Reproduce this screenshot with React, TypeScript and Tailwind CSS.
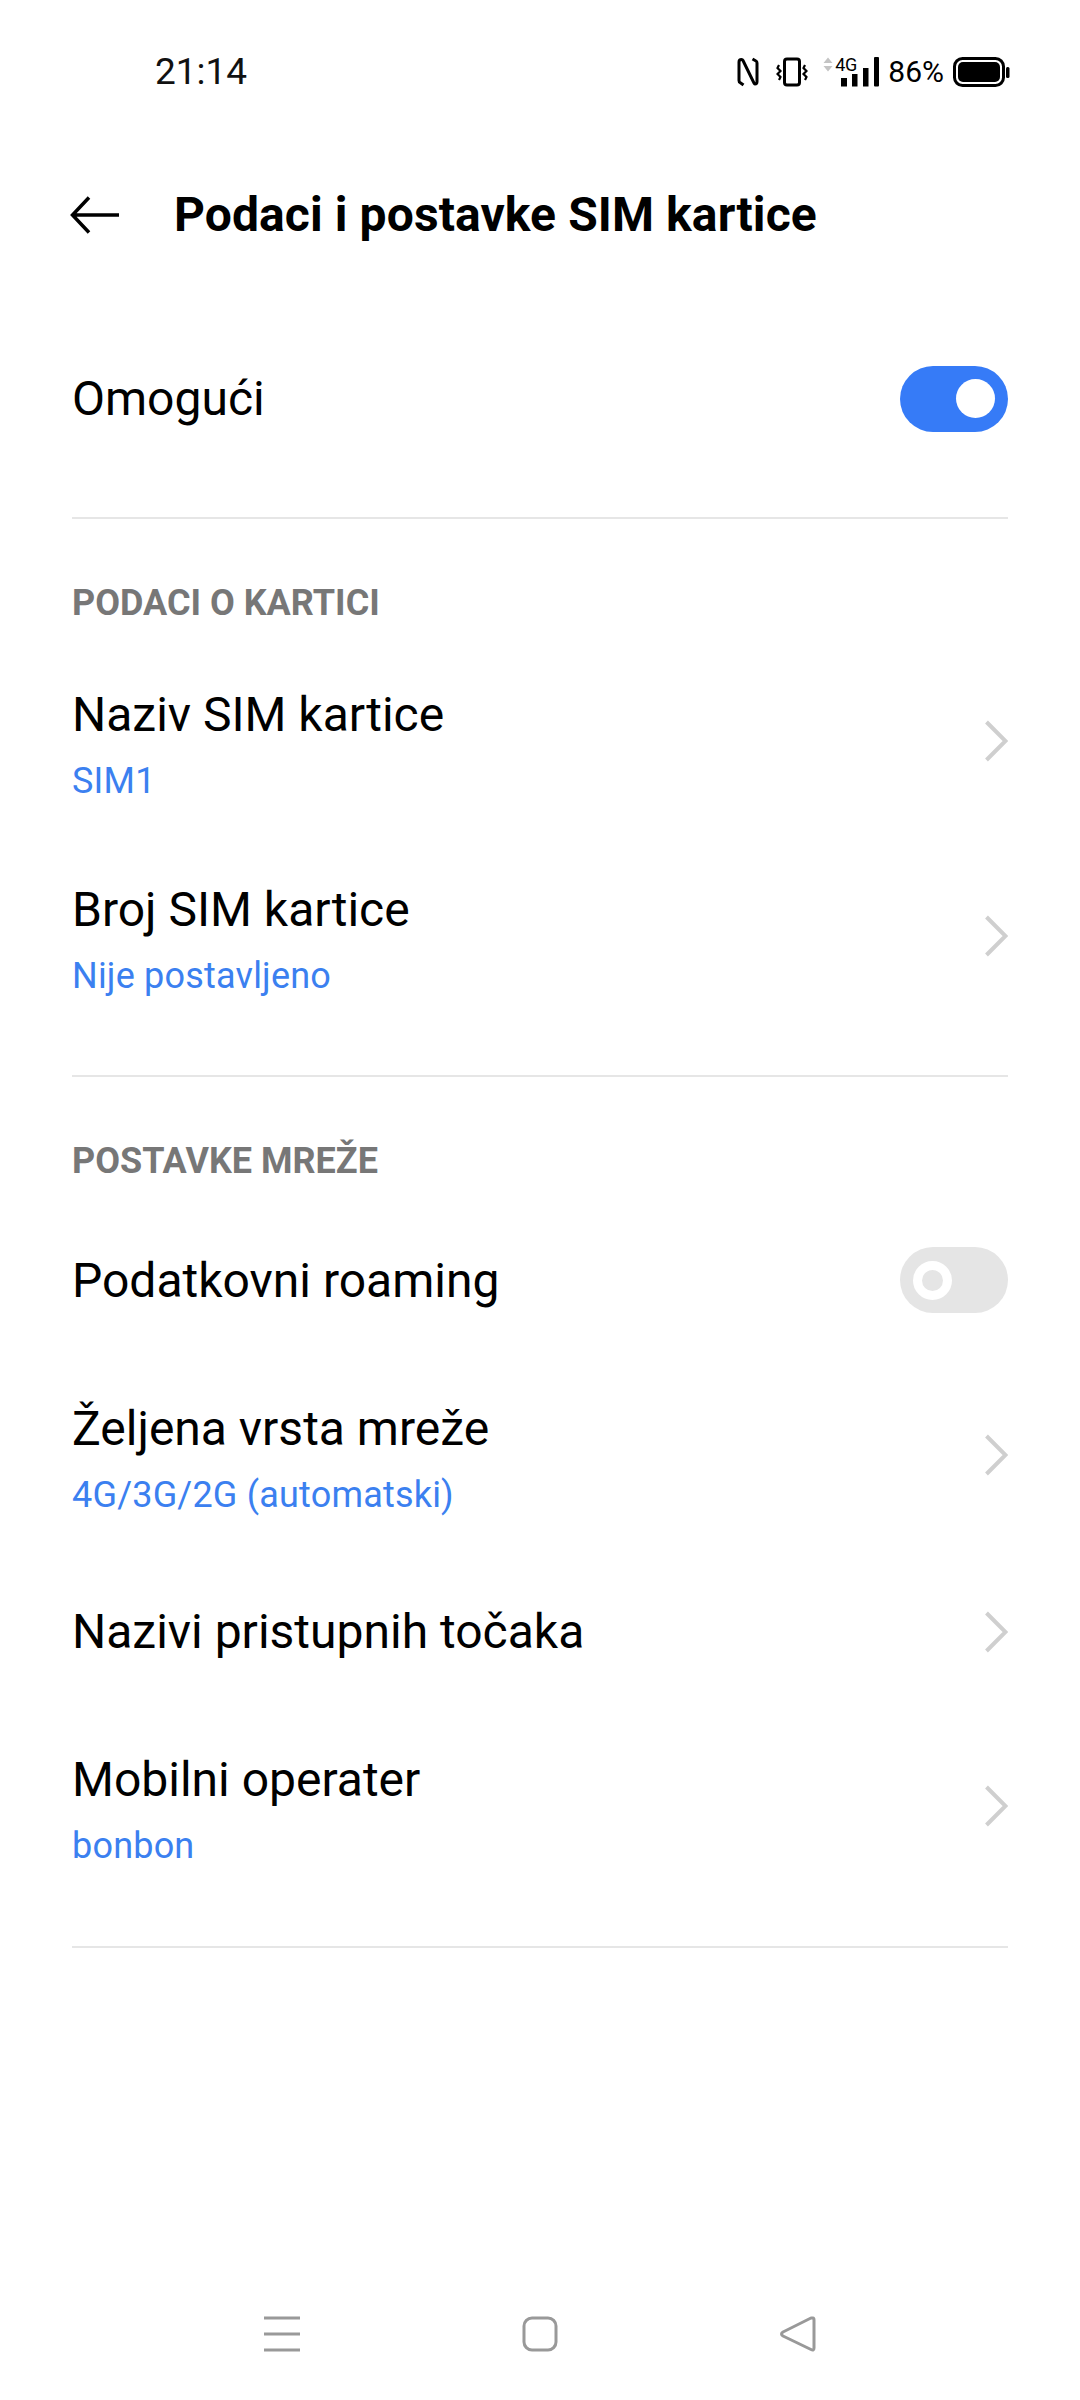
import React from 'react';

const Chevron = ({ lift }: { lift?: boolean }) => (
  <svg width="26" height="44" viewBox="0 0 26 44" fill="none" className={lift ? 'shrink-0 mb-[4px]' : 'shrink-0'}>
    <path d="M4.5 3 L23.5 22 L4.5 41" stroke="#cfcfcf" strokeWidth="4" strokeLinejoin="miter" />
  </svg>
);

const Toggle = ({ on }: { on: boolean }) =>
  on ? (
    <div className="w-[108px] h-[66px] rounded-full bg-[#367bf7] flex items-center justify-end pr-[13px]">
      <div className="w-[39px] h-[39px] rounded-full bg-white" />
    </div>
  ) : (
    <div className="w-[108px] h-[66px] mb-[2px] rounded-full bg-[#e5e5e5] flex items-center pl-[13px]">
      <div className="w-[39px] h-[39px] rounded-full border-[9px] border-white bg-[#e5e5e5]" />
    </div>
  );

const Row = ({ title, sub }: { title: string; sub: string }) => (
  <div className="flex items-center justify-between h-[195px]">
    <div className="flex flex-col pt-[4px]">
      <div className="text-[48px] leading-[56px] text-black">{title}</div>
      <div className="text-[36px] leading-[42px] mt-[17px] tracking-[0.2px] text-[#3b80f0]">{sub}</div>
    </div>
    <Chevron lift />
  </div>
);

const SectionLabel = ({ children }: { children: React.ReactNode }) => (
  <div className="pt-[63px] pb-[21px] text-[36px] leading-[42px] font-bold text-[#777777]">{children}</div>
);

const Divider = () => <div className="h-[2px] bg-[#e6e6e6]" />;

const StatusIcons = () => (
  <div className="flex items-center">
    {/* nfc */}
    <svg width="22" height="30" viewBox="0 0 22 30" fill="none" stroke="#000" strokeWidth="3">
      <path d="M6.5 28 L3 25.5 Q2 25 2 23.5 V5 Q2 2.5 4.5 2.5 Q5.5 2.5 6 3.5 L16.5 25 Q17 27 18 27 Q20 27 20 24.5 V6 Q20 4.5 19 4 L15.5 2" />
    </svg>
    {/* vibrate */}
    <svg width="32" height="30" viewBox="0 0 32 30" fill="none" stroke="#000" className="ml-[17px]">
      <rect x="8.5" y="2" width="15" height="26" rx="2.5" strokeWidth="3" />
      <path d="M3 8 L1.5 11 L4.5 14 L1.5 17 L4.5 20 L3 23" strokeWidth="2.2" />
      <path d="M29 8 L27.5 11 L30.5 14 L27.5 17 L30.5 20 L29 23" strokeWidth="2.2" />
    </svg>
    {/* signal with 4G */}
    <div className="relative w-[56px] h-[30px] ml-[15px]">
      <svg width="56" height="30" viewBox="0 0 56 30" className="absolute left-0 top-0">
        <path d="M5 0.5 L9.5 6 H0.5 Z M5 14.5 L9.5 9 H0.5 Z" fill="#c4c4c4" />
        <rect x="18" y="21" width="6" height="8.5" fill="#000" />
        <rect x="29" y="17" width="5.5" height="12.5" fill="#000" />
        <rect x="40" y="11" width="5.5" height="18.5" fill="#000" />
        <rect x="51" y="0" width="5" height="29.5" rx="1" fill="#000" />
      </svg>
      <span className="absolute left-[12px] top-[-2px] text-[18px] leading-[20px] text-black tracking-[-0.5px]">4G</span>
    </div>
    <span className="ml-[9px] text-[30px] leading-[34px] text-black">86%</span>
    {/* battery */}
    <svg width="57" height="30" viewBox="0 0 57 30" fill="none" className="ml-[9px]">
      <rect x="1.5" y="1.5" width="49" height="27" rx="8" stroke="#000" strokeWidth="3" />
      <rect x="5" y="5" width="42" height="20" rx="5" fill="#000" />
      <rect x="53" y="10" width="3.5" height="11" rx="1.5" fill="#000" />
    </svg>
  </div>
);

export default function App() {
  return (
    <div className="w-[1080px] min-h-[2400px] bg-white flex flex-col font-['Roboto',sans-serif]">
      <div className="h-[144px] flex items-center justify-between pl-[155px] pr-[70px]">
        <span className="text-[37px] leading-[40px] text-[#111]">21:14</span>
        <StatusIcons />
      </div>

      <div className="h-[142px] flex items-center pl-[70px]">
        <svg width="50" height="38" viewBox="0 0 50 38" fill="none" stroke="#000" strokeWidth="3.5">
          <path d="M49 19 H3 M19 1.5 L2.5 19 L19 36.5" />
        </svg>
        <h1 className="ml-[54px] text-[48px] leading-[54px] tracking-[0.1px] font-bold text-black">Podaci i postavke SIM kartice</h1>
      </div>

      <div className="px-[72px] flex flex-col">
        <div className="h-[231px] flex items-center justify-between pb-[6px]">
          <span className="text-[48px] leading-[56px] text-black">Omogući</span>
          <Toggle on />
        </div>
        <Divider />

        <SectionLabel>PODACI O KARTICI</SectionLabel>
        <Row title="Naziv SIM kartice" sub="SIM1" />
        <Row title="Broj SIM kartice" sub="Nije postavljeno" />
        <div className="h-[40px]" />
        <Divider />

        <SectionLabel>POSTAVKE MREŽE</SectionLabel>
        <div className="h-[156px] flex items-center justify-between">
          <span className="text-[48px] leading-[56px] text-black">Podatkovni roaming</span>
          <Toggle on={false} />
        </div>
        <Row title="Željena vrsta mreže" sub="4G/3G/2G (automatski)" />
        <div className="h-[156px] flex items-center justify-between">
          <span className="text-[48px] leading-[56px] text-black">Nazivi pristupnih točaka</span>
          <Chevron />
        </div>
        <Row title="Mobilni operater" sub="bonbon" />
        <div className="h-[41px]" />
        <Divider />
      </div>

      <div className="mt-auto pb-[48px] px-[264px] flex items-center justify-between">
        <svg width="36" height="36" viewBox="0 0 36 36" fill="none" stroke="#999" strokeWidth="3">
          <path d="M0 2 H36 M0 18 H36 M0 34 H36" />
        </svg>
        <svg width="36" height="36" viewBox="0 0 36 36" fill="none" stroke="#999" strokeWidth="3">
          <rect x="2" y="2" width="32" height="32" rx="8" />
        </svg>
        <svg width="36" height="36" viewBox="0 0 36 36" fill="none" stroke="#999" strokeWidth="3" strokeLinejoin="round">
          <path d="M33 2 Q34 2 34 4 V32 Q34 35 31 33.5 L3 20 Q0 18 3 16 L31 2 Z" />
        </svg>
      </div>
    </div>
  );
}
